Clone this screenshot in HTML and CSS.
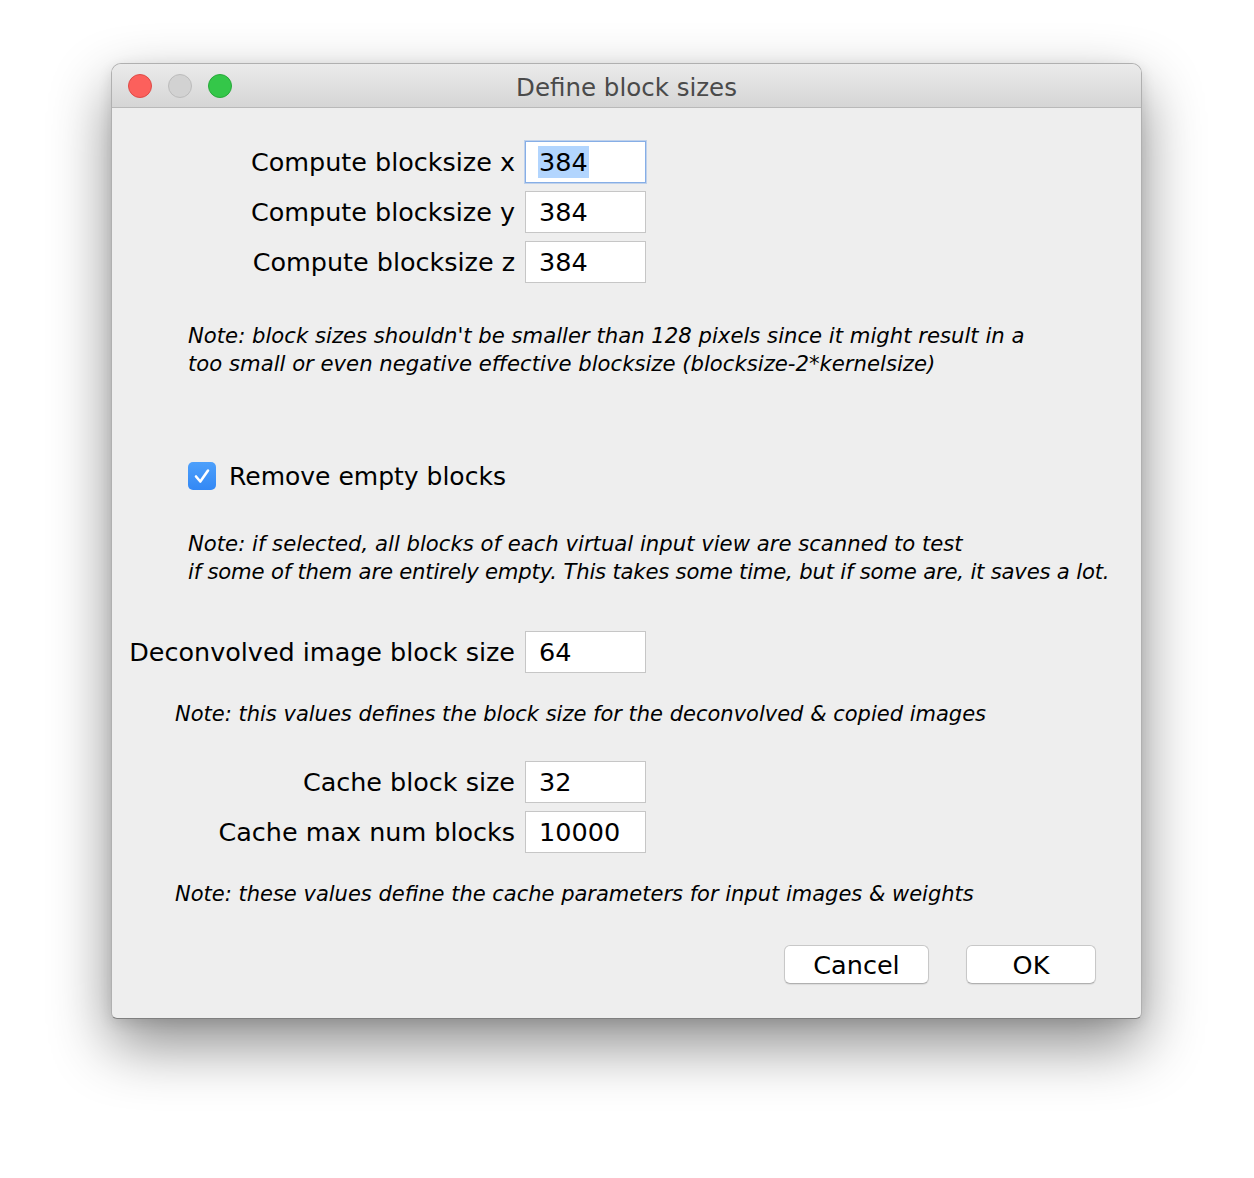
FILE: index.html
```html
<!DOCTYPE html>
<html>
<head>
<meta charset="utf-8">
<link rel="stylesheet" href="styles.css">
</head>
<body>
<div class="window">
  <div class="titlebar">
    <div class="lights">
      <span class="light red"></span>
      <span class="light gray"></span>
      <span class="light green"></span>
    </div>
    <div class="title">Define block sizes</div>
  </div>
  <div class="content">
    <div class="fields first">
      <div class="row"><div class="label">Compute blocksize x</div><div class="field focus"><span class="sel">384</span></div></div>
      <div class="row"><div class="label">Compute blocksize y</div><div class="field">384</div></div>
      <div class="row"><div class="label">Compute blocksize z</div><div class="field">384</div></div>
    </div>
    <div class="note wide n1">Note: block sizes shouldn't be smaller than 128 pixels since it might result in a<br>too small or even negative effective blocksize (blocksize-2*kernelsize)</div>
    <div class="check-row">
      <span class="checkbox"><svg viewBox="0 0 28 28" width="28" height="28"><path d="M8 14.5 L12.3 19.5 L20 8.5" fill="none" stroke="#fff" stroke-width="2.6" stroke-linecap="round" stroke-linejoin="round"/></svg></span>
      <span class="check-label">Remove empty blocks</span>
    </div>
    <div class="note wide n2">Note: if selected, all blocks of each virtual input view are scanned to test<br><span class="squeeze">if some of them are entirely empty. This takes some time, but if some are, it saves a lot.</span></div>
    <div class="fields deconv">
      <div class="row"><div class="label">Deconvolved image block size</div><div class="field">64</div></div>
    </div>
    <div class="note tight n3">Note: this values defines the block size for the deconvolved &amp; copied images</div>
    <div class="fields cache">
      <div class="row"><div class="label">Cache block size</div><div class="field">32</div></div>
      <div class="row"><div class="label">Cache max num blocks</div><div class="field">10000</div></div>
    </div>
    <div class="note tight n4">Note: these values define the cache parameters for input images &amp; weights</div>
    <div class="buttons">
      <div class="btn cancel">Cancel</div>
      <div class="btn ok">OK</div>
    </div>
  </div>
</div>
</body>
</html>
```

FILE: styles.css
```css
html, body {
  margin: 0;
  padding: 0;
  background: #ffffff;
}
body {
  padding: 63px 0 0 111px;
  min-height: 1178px;
  box-sizing: border-box;
  font-family: "DejaVu Sans", "Liberation Sans", sans-serif;
  color: #000;
}
.window {
  width: 1031px;
  box-sizing: border-box;
  border: 1px solid #b0b0b0;
  border-bottom-color: #7f7f7f;
  border-radius: 10px 10px 6px 6px;
  background: #eeeeee;
  box-shadow: 0 26px 60px rgba(0, 0, 0, 0.45), 0 4px 14px rgba(0,0,0,0.10);
  overflow: hidden;
}
.titlebar {
  height: 43px;
  border-bottom: 1px solid #b9b9b9;
  background: linear-gradient(#ebebeb, #d5d5d5);
  display: flex;
  align-items: center;
  position: relative;
}
.lights {
  display: flex;
  gap: 16px;
  padding-left: 16px;
  padding-top: 1px;
}
.light {
  width: 22px;
  height: 22px;
  border-radius: 50%;
  border: 1px solid transparent;
}
.red { background: #fc605c; border-color: #de4b47; }
.gray { background: #d2d2d2; border-color: #bcbcbc; }
.green { background: #34c749; border-color: #28a93a; }
.title {
  position: absolute;
  left: 0;
  right: 0;
  top: 3px;
  bottom: 0;
  display: flex;
  align-items: center;
  justify-content: center;
  font-size: 24.5px;
  color: #4a4a4a;
  pointer-events: none;
}
.content {
  padding: 33px 0 34px 0;
}
.fields {
  display: flex;
  flex-direction: column;
  gap: 8px;
}
.row {
  display: flex;
  align-items: center;
  height: 42px;
}
.label {
  text-align: right;
  font-size: 25.45px;
  padding-right: 10px;
  box-sizing: border-box;
  width: 413px;
  white-space: nowrap;
}
.field {
  width: 121px;
  height: 42px;
  box-sizing: border-box;
  border: 1px solid #c6c6c6;
  background: #ffffff;
  font-size: 25.5px;
  padding-left: 13px;
  display: flex;
  align-items: center;
}
.field.focus {
  border: 1px solid #86aee6;
  box-shadow: 0 0 0 1px rgba(134, 174, 230, 0.45);
}
.sel {
  background: #b2d5fe;
  padding: 0 1px;
  margin-left: -1px;
  line-height: 32px;
}
.note {
  font-style: italic;
  line-height: 28px;
  white-space: nowrap;
}
.note.wide {
  margin-left: 76px;
  font-size: 21.2px;
}
.squeeze {
  letter-spacing: -0.2px;
}
.note.tight {
  margin-left: 63px;
  font-size: 21px;
}
.n1 { margin-top: 39px; }
.check-row {
  margin-top: 84px;
  margin-left: 76px;
  display: flex;
  align-items: center;
  height: 28px;
}
.checkbox {
  width: 28px;
  height: 28px;
  border-radius: 5px;
  background: linear-gradient(#4da0fb, #3388f5);
  display: block;
}
.checkbox svg { display: block; }
.check-label {
  margin-left: 13px;
  font-size: 25px;
}
.n2 { margin-top: 40px; }
.deconv { margin-top: 45px; }
.n3 { margin-top: 27px; }
.cache { margin-top: 33px; }
.n4 { margin-top: 27px; }
.buttons {
  margin-top: 37px;
  display: flex;
  justify-content: flex-end;
  gap: 37px;
  padding-right: 45px;
}
.btn {
  height: 39px;
  box-sizing: border-box;
  background: #ffffff;
  border: 1px solid #c8c8c8;
  border-bottom-color: #b0b0b0;
  border-radius: 6px;
  box-shadow: 0 1px 1px rgba(0,0,0,0.08);
  font-size: 25.5px;
  display: flex;
  align-items: center;
  justify-content: center;
}
.cancel { width: 145px; }
.ok { width: 130px; }
```
